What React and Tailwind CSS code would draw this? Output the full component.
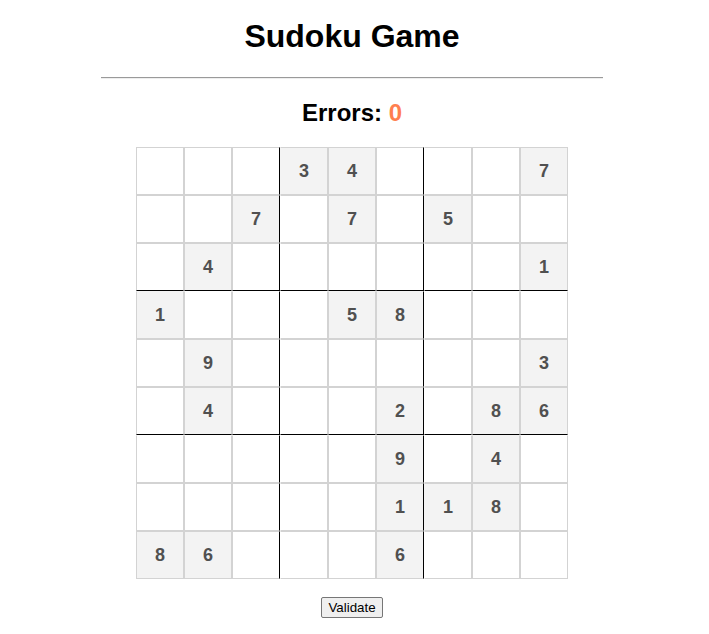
import React from "react";

const grid = [
  [0, 0, 0, 3, 4, 0, 0, 0, 7],
  [0, 0, 7, 0, 7, 0, 5, 0, 0],
  [0, 4, 0, 0, 0, 0, 0, 0, 1],
  [1, 0, 0, 0, 5, 8, 0, 0, 0],
  [0, 9, 0, 0, 0, 0, 0, 0, 3],
  [0, 4, 0, 0, 0, 2, 0, 8, 6],
  [0, 0, 0, 0, 0, 9, 0, 4, 0],
  [0, 0, 0, 0, 0, 1, 1, 8, 0],
  [8, 6, 0, 0, 0, 6, 0, 0, 0],
];

function Cell({ v, r, c }) {
  const cls = [
    "w-[48px] h-[48px] border border-[#d3d3d3] flex items-center justify-center text-[18px] font-bold text-[#505050]",
    v ? "bg-[#f3f3f3]" : "bg-white",
    c === 2 || c === 5 ? "border-r-black" : "",
    c === 3 || c === 6 ? "border-l-transparent" : "",
    r === 2 || r === 5 ? "border-b-black" : "",
    r === 3 || r === 6 ? "border-t-transparent" : "",
  ].join(" ");
  return <div className={cls}>{v ? v : ""}</div>;
}

export default function App() {
  return (
    <div className="w-[704px] flex flex-col items-center font-['Liberation_Sans',Arial,sans-serif] text-black bg-white">
      <h1 className="mt-[18px] text-[32px] leading-[37px] font-bold">Sudoku Game</h1>
      <div className="mt-[22px] w-[502px] border-t border-t-[#9a9a9a] border-b border-b-[#eeeeee]"></div>
      <h2 className="mt-[20px] text-[24px] leading-[28px] font-bold">
        Errors: <span className="text-[#ff7f50]">0</span>
      </h2>
      <div className="mt-[20px] grid grid-cols-[repeat(9,48px)]">
        {grid.map((row, r) =>
          row.map((v, c) => <Cell key={r + "-" + c} v={v} r={r} c={c} />)
        )}
      </div>
      <button className="mt-[18px] h-[21px] px-[6px] text-[13.33px] leading-[15px] bg-[#efefef] border border-[#767676] rounded-[2px] text-black">
        Validate
      </button>
    </div>
  );
}
